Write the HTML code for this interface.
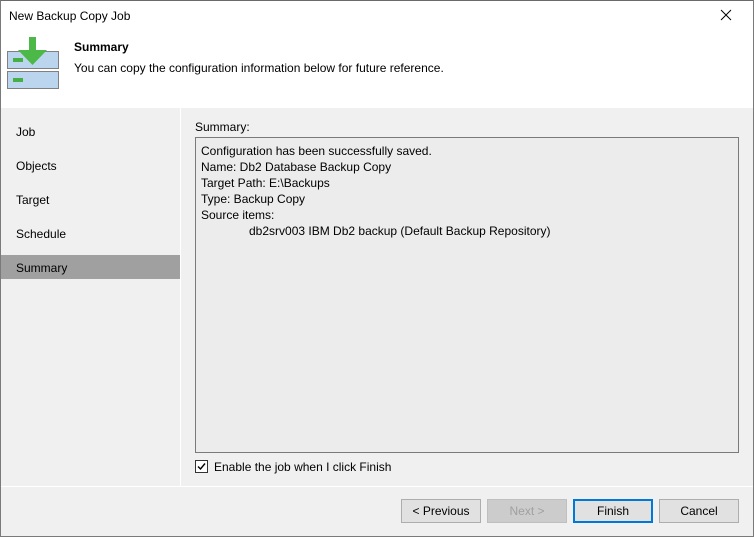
<!DOCTYPE html>
<html><head><meta charset="utf-8"><style>
*{margin:0;padding:0;box-sizing:border-box}
body{width:754px;height:537px;overflow:hidden;background:#f0f0f0;font-family:"Liberation Sans",sans-serif;font-size:12px;color:#000;position:relative}
.abs{position:absolute}
.win{left:0;top:0;width:754px;height:537px;border:1px solid #7a7a7a;border-top-color:#6a6a6a}
.btn{position:absolute;top:499px;width:80px;height:24px;border:1px solid #adadad;background:#e1e1e1;text-align:center;line-height:22px;font-size:12px}
.nav{position:absolute;left:16px;font-size:12px}
</style></head><body>
<div class="abs" style="left:0;top:0;width:754px;height:108px;background:#fff"></div>
<div class="abs" style="left:9px;top:9px;font-size:12px">New Backup Copy Job</div>
<svg class="abs" style="left:719px;top:8px" width="14" height="14"><path d="M2 2L12 12M12 2L2 12" stroke="#000" stroke-width="1"/></svg>
<svg class="abs" style="left:6px;top:36px" width="54" height="54">
<rect x="1.5" y="15.5" width="51" height="17" fill="#bcd5ee" stroke="#808080"/>
<rect x="1.5" y="35.5" width="51" height="17" fill="#bcd5ee" stroke="#808080"/>
<rect x="7" y="22" width="10" height="4" fill="#46b046"/>
<rect x="7" y="42" width="10" height="4" fill="#46b046"/>
<path d="M23 1h7v13h11l-14.5 15l-14.5-15h11z" fill="#4cb847"/>
</svg>
<div class="abs" style="left:74px;top:40px;font-weight:bold">Summary</div>
<div class="abs" style="left:74px;top:61px">You can copy the configuration information below for future reference.</div>
<div class="abs" style="left:180px;top:108px;width:1px;height:378px;background:#fff"></div>
<div class="abs" style="left:1px;top:486px;width:752px;height:1px;background:#fff"></div>
<div class="nav" style="top:125px">Job</div>
<div class="nav" style="top:159px">Objects</div>
<div class="nav" style="top:193px">Target</div>
<div class="nav" style="top:227px">Schedule</div>
<div class="abs" style="left:1px;top:255px;width:179px;height:24px;background:#a0a0a0"></div>
<div class="nav" style="top:261px">Summary</div>
<div class="abs" style="left:195px;top:120px">Summary:</div>
<div class="abs" style="left:195px;top:137px;width:544px;height:316px;border:1px solid #7a7a7a;background:#ececec;padding:5px 0 0 5px;line-height:16px">
Configuration has been successfully saved.<br>Name: Db2 Database Backup Copy<br>Target Path: E:\Backups<br>Type: Backup Copy<br>Source items:<br><span style="padding-left:48px">db2srv003 IBM Db2 backup (Default Backup Repository)</span></div>
<div class="abs" style="left:195px;top:460px;width:13px;height:13px;border:1px solid #333;background:#fff"></div>
<svg class="abs" style="left:196px;top:461px" width="11" height="11"><path d="M2 5.5L4.5 8L9 2.5" stroke="#000" stroke-width="1.4" fill="none"/></svg>
<div class="abs" style="left:214px;top:460px">Enable the job when I click Finish</div>
<div class="btn" style="left:401px">&lt; Previous</div>
<div class="btn" style="left:487px;background:#cccccc;border-color:#bfbfbf;color:#a0a0a0">Next &gt;</div>
<div class="btn" style="left:573px;border:2px solid #0078d7;line-height:20px">Finish</div>
<div class="btn" style="left:659px">Cancel</div>
<div class="abs win"></div>
</body></html>
